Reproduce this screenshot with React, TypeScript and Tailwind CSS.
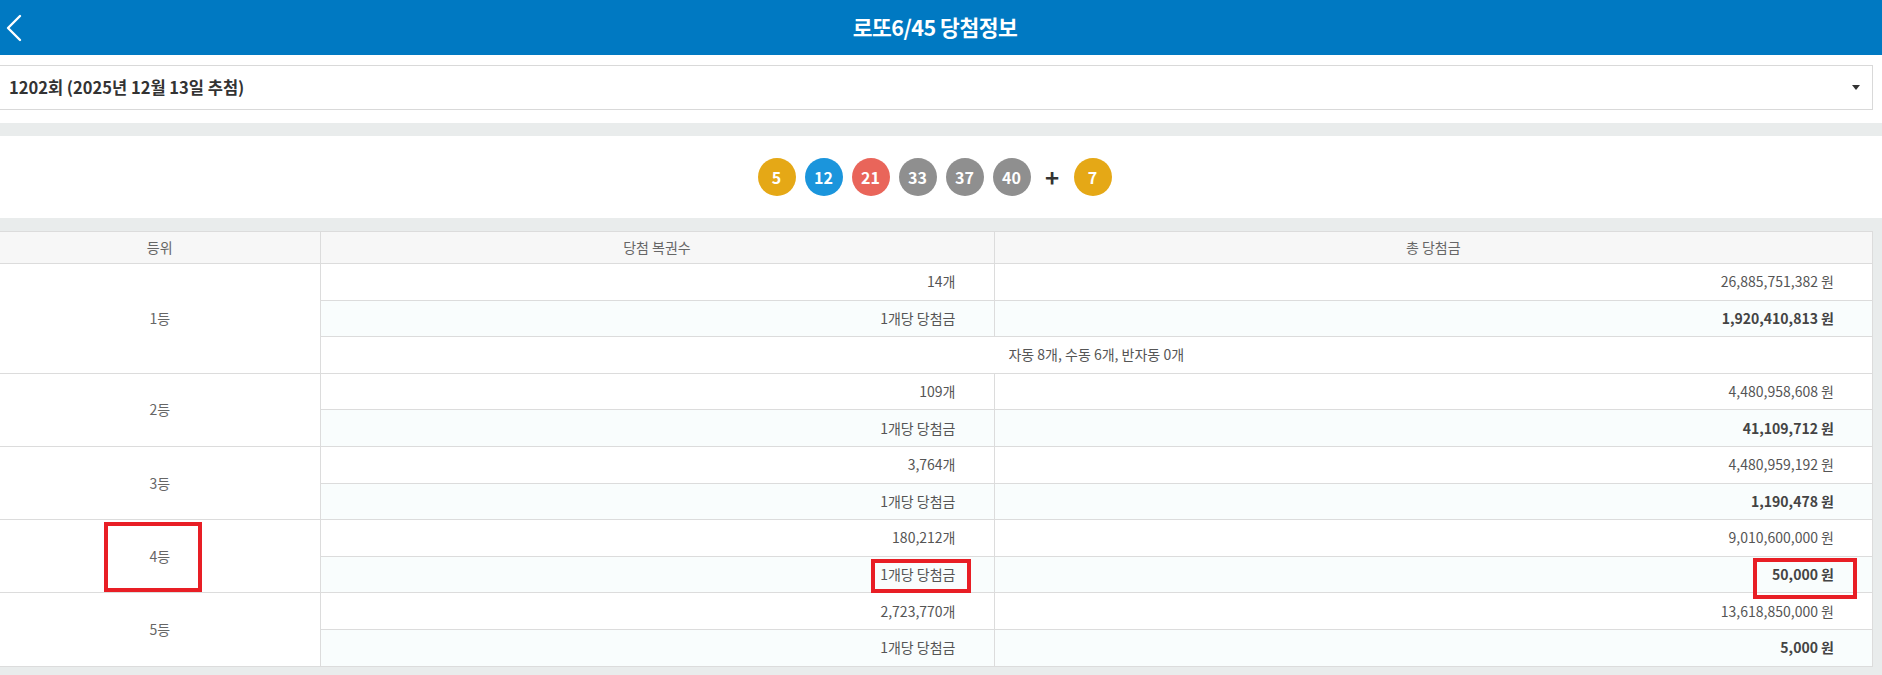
import React from "react";

type Row = {
  rank: string;
  count: string;
  total: string;
  each: string;
  note?: string;
};

const balls: { n: number; c: string }[] = [
  { n: 5, c: "bg-[#e5a816]" },
  { n: 12, c: "bg-[#1b95dc]" },
  { n: 21, c: "bg-[#e9655a]" },
  { n: 33, c: "bg-[#8f8f8f]" },
  { n: 37, c: "bg-[#8f8f8f]" },
  { n: 40, c: "bg-[#8f8f8f]" },
];

const rows: Row[] = [
  { rank: "1등", count: "14개", total: "26,885,751,382 원", each: "1,920,410,813 원", note: "자동 8개, 수동 6개, 반자동 0개" },
  { rank: "2등", count: "109개", total: "4,480,958,608 원", each: "41,109,712 원" },
  { rank: "3등", count: "3,764개", total: "4,480,959,192 원", each: "1,190,478 원" },
  { rank: "4등", count: "180,212개", total: "9,010,600,000 원", each: "50,000 원" },
  { rank: "5등", count: "2,723,770개", total: "13,618,850,000 원", each: "5,000 원" },
];

const cell = "border border-[#dcdcdc] h-[36.6px] px-[38px] py-0";

export default function App() {
  return (
    <div
      className="relative w-full bg-white text-[#555]"
      style={{ fontFamily: '"Noto Sans CJK KR", "Noto Sans", sans-serif' }}
    >
      <header className="grid h-[55px] grid-cols-[48px_1fr_60px] items-center bg-[#0079c2] text-white">
        <button className="flex h-full items-center pl-[4px]">
          <svg width="24" height="44" viewBox="0 0 24 44" fill="none">
            <polyline points="16,10 4,22 16,34" stroke="white" strokeWidth="2.4" strokeLinecap="round" strokeLinejoin="round" />
          </svg>
        </button>
        <h1 className="text-center text-[21.5px] font-bold tracking-[-0.5px]">로또6/45 당첨정보</h1>
        <div />
      </header>

      <div className="bg-white pt-[10px] pb-[13px] pr-[9px]">
        <div className="flex h-[45px] items-center justify-between border border-l-0 border-[#d9d9d9] pl-[9px] pr-[12px]">
          <span className="text-[16.5px] font-bold text-[#333]">1202회 (2025년 12월 13일 추첨)</span>
          <svg width="8" height="5" viewBox="0 0 8 5">
            <polygon points="0,0 8,0 4,5" fill="#333" />
          </svg>
        </div>
      </div>

      <div className="h-[13px] bg-[#e9ecec]" />

      <div className="flex h-[82px] items-center justify-center gap-[9px] bg-white pr-[13px]">
        {balls.map((b) => (
          <span
            key={b.n}
            className={`flex h-[38px] w-[38px] items-center justify-center rounded-full text-[16px] font-bold text-white ${b.c}`}
          >
            {b.n}
          </span>
        ))}
        <span className="w-[25px] text-center text-[24px] font-bold leading-none text-[#333]">+</span>
        <span className="flex h-[38px] w-[38px] items-center justify-center rounded-full bg-[#e5a816] text-[16px] font-bold text-white">
          7
        </span>
      </div>

      <div className="bg-[#e9ecec] pt-[13px] pb-[9px] pr-[9px]">
        <table className="w-full table-fixed border-collapse bg-white text-[14px]">
          <colgroup>
            <col className="w-[320px]" />
            <col className="w-[674px]" />
            <col />
          </colgroup>
          <thead>
            <tr className="bg-[#f7f7f7] text-[#666]">
              <th className="h-[32px] border border-l-0 border-[#dcdcdc] font-normal">등위</th>
              <th className="h-[32px] border border-[#dcdcdc] font-normal">당첨 복권수</th>
              <th className="h-[32px] border border-[#dcdcdc] font-normal">총 당첨금</th>
            </tr>
          </thead>
          <tbody>
            {rows.map((r) => (
              <React.Fragment key={r.rank}>
                <tr>
                  <td rowSpan={r.note ? 3 : 2} className="border border-l-0 border-[#dcdcdc] text-center text-[#666]">
                    {r.rank}
                  </td>
                  <td className={`${cell} text-right`}>{r.count}</td>
                  <td className={`${cell} text-right`}>{r.total}</td>
                </tr>
                <tr className="bg-[#f9fdfd]">
                  <td className={`${cell} text-right`}>1개당 당첨금</td>
                  <td className={`${cell} text-right font-bold text-[#444]`}>{r.each}</td>
                </tr>
                {r.note && (
                  <tr>
                    <td colSpan={2} className={`${cell} text-center`}>
                      {r.note}
                    </td>
                  </tr>
                )}
              </React.Fragment>
            ))}
          </tbody>
        </table>
      </div>

      {/* 빨간 표시 박스 */}
      <div className="pointer-events-none absolute left-[104px] top-[522px] h-[70px] w-[98px] border-4 border-[#e81e25]" />
      <div className="pointer-events-none absolute left-[871px] top-[559px] h-[34px] w-[100px] border-4 border-[#e81e25]" />
      <div className="pointer-events-none absolute left-[1753px] top-[558px] h-[41px] w-[104px] border-4 border-[#e81e25]" />
    </div>
  );
}
